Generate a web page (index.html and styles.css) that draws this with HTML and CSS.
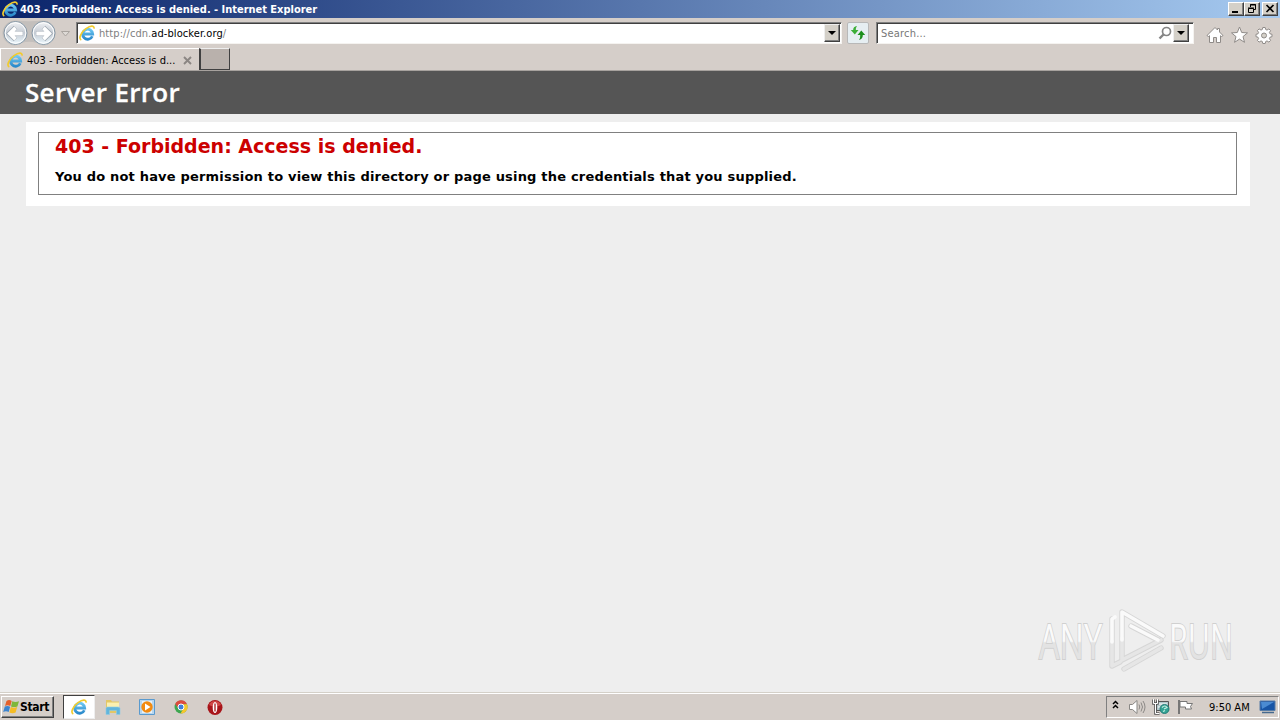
FILE: index.html
```html
<!DOCTYPE html>
<html lang="en">
<head>
    <meta charset="UTF-8">
    <title>403 - Forbidden: Access is denied.</title>
    <link rel="stylesheet" href="styles.css">
</head>
<body>
    <svg class="defs" width="0" height="0">
        <linearGradient id="ie-blue" x1="0" y1="0" x2="0" y2="1">
            <stop offset="0" stop-color="#6cc6f2"/>
            <stop offset="1" stop-color="#2b8acb"/>
        </linearGradient>
        <linearGradient id="nav-fill" x1="0" y1="0" x2="0" y2="1">
            <stop offset="0" stop-color="#f3f4f6"/>
            <stop offset="0.5" stop-color="#c3cad3"/>
            <stop offset="1" stop-color="#eefaff"/>
        </linearGradient>
        <linearGradient id="mark-fill" gradientUnits="userSpaceOnUse" x1="0" y1="14" x2="0" y2="54">
            <stop offset="0.48" stop-color="#fafafa"/>
            <stop offset="0.52" stop-color="#e3e3e3"/>
        </linearGradient>
        <symbol id="ie" viewBox="0 0 16 16">
            <path d="M13.300 11.200A5 5 0 1 1 13.700 9H5" fill="none" stroke="url(#ie-blue)" stroke-width="2.800"/>
            <path d="M2.300 15C-.8 13.600 2 7 7 3.600 11.500.6 15.400.2 15 3.600" fill="none" stroke="#f2cb2d" stroke-width="1.700"/>
        </symbol>
    </svg>

    <div class="title-bar">
        <svg class="icon"><use href="#ie"/></svg>
        <span class="title-text">403 - Forbidden: Access is denied. - Internet Explorer</span>
        <div class="window-buttons">
            <span class="win-btn"><svg width="14" height="11"><path d="M3 9h6" stroke="#000" stroke-width="2"/></svg></span>
            <span class="win-btn"><svg width="14" height="11"><path d="M5.500 4V1.500h5v5H9M5 2h6M3.500 5.500h5v4h-5zM3 5h6" fill="none" stroke="#000"/></svg></span>
            <span class="win-btn close"><svg width="14" height="11"><path d="M3.500 2l7 7M10.500 2l-7 7" stroke="#000" stroke-width="1.700"/></svg></span>
        </div>
    </div>

    <div class="toolbar">
        <svg class="nav" width="76" height="30" viewBox="0 0 76 30">
            <path d="M15 2.500Q29 4 43 2.500A12.500 12.500 0 0 1 43 27.500Q29 20 15 27.500A12.500 12.500 0 0 1 15 2.500" fill="#c3bfbc"/>
            <g fill="url(#nav-fill)" stroke="#8798a6">
                <circle cx="15.500" cy="15" r="11.500"/>
                <circle cx="43.500" cy="15" r="11.500"/>
            </g>
            <g fill="none" stroke="#fff">
                <circle cx="15.500" cy="15" r="10.300"/>
                <circle cx="43.500" cy="15" r="10.300"/>
            </g>
            <g stroke="#a2abb5" stroke-width="5" fill="none">
                <path d="M23 15.500H11M15.500 9.500l-6 6 6 6M36 15.500H48M43.500 9.500l6 6-6 6"/>
            </g>
            <g stroke="#fff" stroke-width="3.800" fill="none">
                <path d="M22.700 15.500H11M15.500 9.800l-5.700 5.700 5.700 5.700M36.300 15.500H48M43.500 9.800l5.700 5.700-5.700 5.700"/>
            </g>
            <path d="M61.500 13.500h8l-4 4.500z" fill="#dedad6" stroke="#aaa5a0"/>
        </svg>
        <div class="address field">
            <svg class="icon"><use href="#ie"/></svg>
            <span class="url">http://cdn.<b>ad-blocker.org</b>/</span>
            <span class="drop"></span>
        </div>
        <div class="refresh">
            <svg width="16" height="16" viewBox="0 0 16 16">
                <path d="M7 1Q3 1.500 3.200 5H.8l4 4.500L8.500 5H5.800Q5.500 3 7 1z" fill="#3cae38"/>
                <path d="M9 15Q13 14 12.800 10H15.200L11.300 5.500 7.500 10h2.700Q10.500 12.800 9 15z" fill="#1d8f1d"/>
            </svg>
        </div>
        <div class="search field">
            <span class="search-text">Search...</span>
            <svg class="lens" width="14" height="15"><circle cx="8.500" cy="5.500" r="4" fill="none" stroke="#858585" stroke-width="1.700"/><path d="M5.500 8.500L1.500 12.500" stroke="#858585" stroke-width="2.400"/></svg>
            <span class="drop"></span>
        </div>
        <svg class="tools" width="68" height="20" fill="#fff" stroke="#8f8b88">
            <path d="M1 10.500L9 2.500l2.500 2.500V3.500h2v3.500L17 10.500l-1.500 1-1-.8V17.500h-4v-5h-3v5h-4v-6.800l-1 .8z"/>
            <path d="M33.500 2l2.200 5.500 5.800.4-4.500 3.700 1.500 5.700-5-3.200-5 3.200 1.500-5.700-4.500-3.700 5.800-.4z"/>
            <path d="M56.800 2.500h2.400l.5 2 1.300.6 1.900-1.200 1.700 1.700-1.200 1.900.6 1.300 2 .5v2.400l-2 .5-.6 1.300 1.200 1.900-1.700 1.700-1.900-1.200-1.300.6-.5 2h-2.400l-.5-2-1.300-.6-1.900 1.200-1.700-1.700 1.200-1.900-.6-1.300-2-.5V9.300l2-.5.6-1.300-1.200-1.900 1.700-1.700L55 5.100l1.300-.6z"/>
            <circle cx="58" cy="10.500" r="2.500" fill="#d4d0c8"/>
        </svg>
    </div>

    <div class="tab-bar">
        <div class="tab">
            <svg class="icon"><use href="#ie"/></svg>
            <span class="tab-text">403 - Forbidden: Access is d...</span>
            <svg class="tab-close" width="9" height="9"><path d="M1 1l7 7M8 1L1 8" stroke="#8b8683" stroke-width="1.900"/></svg>
        </div>
        <div class="new-tab"></div>
    </div>

    <div class="page">
        <div class="page-header"><h1>Server Error</h1></div>
        <div class="content">
            <div class="error-box">
                <h2>403 - Forbidden: Access is denied.</h2>
                <h3>You do not have permission to view this directory or page using the credentials that you supplied.</h3>
            </div>
        </div>
        <svg class="watermark" width="230" height="80" viewBox="0 0 230 80">
            <g class="mark-text">
                <text x="3" y="51" textLength="63" lengthAdjust="spacingAndGlyphs">ANY</text>
                <text x="133" y="51" textLength="64" lengthAdjust="spacingAndGlyphs">RUN</text>
            </g>
            <g fill="none" stroke-linejoin="round" stroke-linecap="round">
                <path d="M86 52V4L127 28M86 52l39-20M76 11V58l8-4M88 61l37-21M95 18l27 14" stroke="#d6d6d6" stroke-width="5.400"/>
                <path d="M86 52l39-20M76 33V58l8-4M86 52V30M88 61l37-21" stroke="#e6e6e6" stroke-width="3.600"/>
                <path d="M86 32V4L127 28M76 34V11l3-2M95 18l27 14" stroke="#fafafa" stroke-width="3.600"/>
            </g>
        </svg>
    </div>

    <div class="taskbar">
        <div class="start">
            <svg width="17" height="16" viewBox="0 0 17 16">
                <path d="M3.500 2Q6 .3 8.700 1.900L7.300 7Q4.500 5.700 2 7z" fill="#e5602b"/>
                <path d="M9.300 2.300Q12.500 3.800 16 2.200L14.400 7.400Q11 8.800 8 7.400z" fill="#7fb73a"/>
                <path d="M1.800 7.600Q4.500 6.400 7.100 7.700L5.700 13Q3 11.500.2 13z" fill="#3c84cf"/>
                <path d="M7.800 8.100Q11 9.500 14.200 8.100L12.600 13.500Q9.500 15 6.400 13.500z" fill="#f5bc25"/>
            </svg>
            <span class="start-text">Start</span>
        </div>
        <div class="task active"><svg width="16" height="16"><use href="#ie"/></svg></div>
        <div class="task">
            <svg width="18" height="18">
                <path d="M2 2h5l1 1.500h7V15H2z" fill="#e3c766"/>
                <path d="M3 4.500h12v7H3z" fill="#fbf0b1"/>
                <path d="M2 16.500V10.500q0-1.500 1.500-1.500h10.500q2 0 2 1.500v6h-3.500v-4H5.500v4z" fill="#62b5dc" stroke="#8fcde5" stroke-width=".6"/>
            </svg>
        </div>
        <div class="task">
            <svg width="18" height="18">
                <path d="M1.500 1.500h15v15h-15z" fill="#b6d6ef" stroke="#5a9ace"/>
                <path d="M4 3h10v12H4z" fill="#e7f1f8"/>
                <circle cx="9" cy="9" r="5.700" fill="#f28a10"/>
                <path d="M7 5.500v7l5.500-3.500z" fill="#fff"/>
            </svg>
        </div>
        <div class="task">
            <svg width="18" height="18">
                <circle cx="9" cy="9" r="6.500" fill="#3ea650"/>
                <path d="M3.200 6A6.500 6.500 0 0 1 15 6.300H9L6.500 10.500z" fill="#dc4b3e"/>
                <path d="M15 6.300A6.500 6.500 0 0 1 8.500 15.500L12 9.500 9 6.300z" fill="#f6c72c"/>
                <circle cx="9" cy="9" r="3" fill="#3f7fda" stroke="#fff"/>
            </svg>
        </div>
        <div class="task">
            <svg width="18" height="18">
                <circle cx="9" cy="9.500" r="7.500" fill="#a81419"/>
                <path d="M3 7a6.500 6.500 0 0 1 12 0q-6 3-12 0" fill="#cf4846"/>
                <ellipse cx="9" cy="9.500" rx="2.300" ry="5.500" fill="#fff"/>
                <path d="M9 5.500v8" stroke="#a51a1a" stroke-width="1.300"/>
            </svg>
        </div>
        <div class="tray">
            <svg width="92" height="20" fill="none">
                <path d="M6 7l2.500-2.500L11 7M6 11l2.500-2.500L11 11" stroke="#000" stroke-width="1.500"/>
                <path d="M22.500 7.500h3l4.500-4v13l-4.500-4h-3z" fill="#fff" stroke="#898784"/>
                <path d="M32 7.500q1.500 2.500 0 5M34 5.500q3 4.500 0 9M36 4q4 6 0 12" stroke="#8c8986"/>
                <path d="M49.500 4.500h12v9h-12z" fill="#b3c8cc" stroke="#555"/>
                <path d="M51 7h9M51 10h5" stroke="#fff"/>
                <path d="M46.500 2.500v4h4v-4M48.500 6.500v10h4" stroke="#555" stroke-width="2.600"/>
                <path d="M46.500 2v4.500h4V2M48.500 6.500v10h4" stroke="#fff"/>
                <circle cx="57.500" cy="12" r="4.500" fill="#32a394" stroke="#287c78"/>
                <path d="M55 10.500q3-3 5 0l-3 1.500M56 14.500l2-1" stroke="#c8f0e2" stroke-width="1.200"/>
                <path d="M72 3v14" stroke="#777" stroke-width="2"/>
                <path d="M73 4.500h7v2h5.500l-2 3 1 2.500h-6v-2h-5.500z" fill="#fff" stroke="#777"/>
            </svg>
            <span class="clock">9:50 AM</span>
            <svg class="desktop" width="17" height="18">
                <path d="M1 3h15v9.500H1z" fill="#1855a6" stroke="#587da7"/>
                <path d="M2 4h13L3 11z" fill="#4b8bd2"/>
                <path d="M3 14.500h12" stroke="#46698e" stroke-width="1.500"/>
            </svg>
        </div>
    </div>
</body>
</html>
```
FILE: styles.css
```css
* {
    box-sizing: border-box;
}
body {
    margin: 0;
    width: 1280px;
    height: 720px;
    overflow: hidden;
    display: flex;
    flex-direction: column;
    background: #d4d0c8;
    font-family: "DejaVu Sans Condensed", "DejaVu Sans", sans-serif;
    font-size: 11px;
    white-space: nowrap;
}
svg {
    display: block;
    flex: none;
}
.defs {
    position: absolute;
}
.icon {
    width: 16px;
    height: 16px;
}
.title-bar {
    height: 18px;
    flex: none;
    display: flex;
    align-items: center;
    padding: 0 2px;
    background: linear-gradient(to right, #0a246a, #a6caf0);
    color: #fff;
    font-weight: bold;
}
.title-text {
    margin-left: 2px;
    letter-spacing: -0.02px;
}
.window-buttons {
    display: flex;
    margin-left: auto;
}
.win-btn {
    width: 16px;
    height: 14px;
    background: #d4d0c8;
    border: 1px solid;
    border-color: #fff #404040 #404040 #fff;
    box-shadow: inset -1px -1px #808080;
}
.win-btn.close {
    margin-left: 2px;
}
.toolbar {
    height: 30px;
    flex: none;
    display: flex;
    align-items: center;
    background: #d5cec9;
}
.field {
    height: 22px;
    display: flex;
    align-items: center;
    background: #fff;
    border: 1px solid;
    border-color: #808080 #f5f3f0 #f5f3f0 #808080;
    box-shadow: inset 1px 1px #404040;
}
.address {
    width: 766px;
    padding: 0 1px 0 2px;
}
.url {
    margin-left: 4px;
    color: #808080;
    letter-spacing: 0.08px;
}
.url b {
    font-weight: normal;
    color: #000;
}
.drop {
    width: 16px;
    height: 18px;
    margin-left: auto;
    display: flex;
    align-items: center;
    justify-content: center;
    background: #d4d0c8;
    border: 1px solid;
    border-color: #eee #404040 #404040 #eee;
    box-shadow: inset -1px -1px #808080;
}
.drop::after {
    content: "";
    border: 4px solid transparent;
    border-top-color: #000;
    border-bottom: none;
}
.refresh {
    width: 22px;
    height: 22px;
    margin: 0 7px 0 5px;
    padding: 2px;
    background: #e6eef2;
    border: 1px solid #b8b8b8;
    border-radius: 2px;
}
.search {
    width: 318px;
    padding: 0 4px;
}
.search-text {
    color: #777;
    letter-spacing: 0.2px;
}
.lens {
    margin-left: auto;
}
.lens + .drop {
    margin-left: 1px;
}
.tools {
    margin: 3px 0 0 12px;
}
.tab-bar {
    height: 23px;
    flex: none;
    display: flex;
    background: #d5cec9;
    border-bottom: 1px solid #a7a29e;
}
.tab {
    width: 199px;
    display: flex;
    align-items: center;
    padding: 1px 7px 0 6px;
    border-top: 1px solid #fff;
    border-left: 1px solid #fff;
}
.tab-text {
    margin-left: 4px;
}
.tab-close {
    margin-left: auto;
}
.new-tab {
    width: 31px;
    height: 22px;
    background: #b9b1ac;
    border: 1px solid;
    border-width: 1px 1px 1px 2px;
    border-color: #eee #404040 #404040 #404040;
}
.page {
    flex: 1;
    position: relative;
    background: #eee;
    border-bottom: 1px solid #d4d0c8;
}
.page-header {
    height: 43px;
    padding-left: 25px;
    background: #555;
    color: #fff;
}
h1 {
    margin: 0;
    font: 600 26px/43px "Open Sans", sans-serif;
    letter-spacing: 0.3px;
    -webkit-text-stroke: 0.3px #fff;
}
.content {
    margin: 8px 30px 0 26px;
    height: 84px;
    padding: 10px 13px 11px 12px;
    background: #fff;
}
.error-box {
    height: 63px;
    padding-left: 16px;
    border: 1px solid #808080;
    font-family: "DejaVu Sans", sans-serif;
}
h2 {
    margin: 0;
    font-size: 19px;
    line-height: 27px;
    color: #c00;
}
h3 {
    margin: 7px 0 0;
    font-size: 13px;
    line-height: 19px;
    letter-spacing: 0.19px;
}
/* recording logo sits over the page */
.watermark {
    position: absolute;
    right: 14px;
    bottom: 4px;
}
.mark-text {
    font: 49px "Open Sans", sans-serif;
    fill: url(#mark-fill);
    stroke: #d0d0d0;
    stroke-width: 2px;
    paint-order: stroke;
}
.taskbar {
    height: 27px;
    flex: none;
    display: flex;
    align-items: center;
    padding: 0 1px;
    border-top: 1px solid #fff;
    background: #d5cec9;
}
.start {
    width: 53px;
    height: 22px;
    display: flex;
    align-items: center;
    padding-left: 1px;
    margin-right: 9px;
    border: 1px solid;
    border-color: #fff #404040 #404040 #fff;
    box-shadow: inset -1px -1px #808080;
}
.start-text {
    font-weight: bold;
    font-size: 12px;
    letter-spacing: -0.3px;
}
.task {
    width: 34px;
    height: 24px;
    display: flex;
    align-items: center;
    justify-content: center;
}
.task.active {
    width: 32px;
    margin-right: 1px;
    background: #fff;
    border: 1px solid;
    border-color: #404040 #eee #eee #404040;
}
.tray {
    width: 173px;
    height: 22px;
    margin-left: auto;
    display: flex;
    align-items: center;
    border: 1px solid;
    border-color: #808080 #fff #fff #808080;
}
.clock {
    margin-left: 10px;
}
.desktop {
    margin: 0 2px 0 auto;
}
```
